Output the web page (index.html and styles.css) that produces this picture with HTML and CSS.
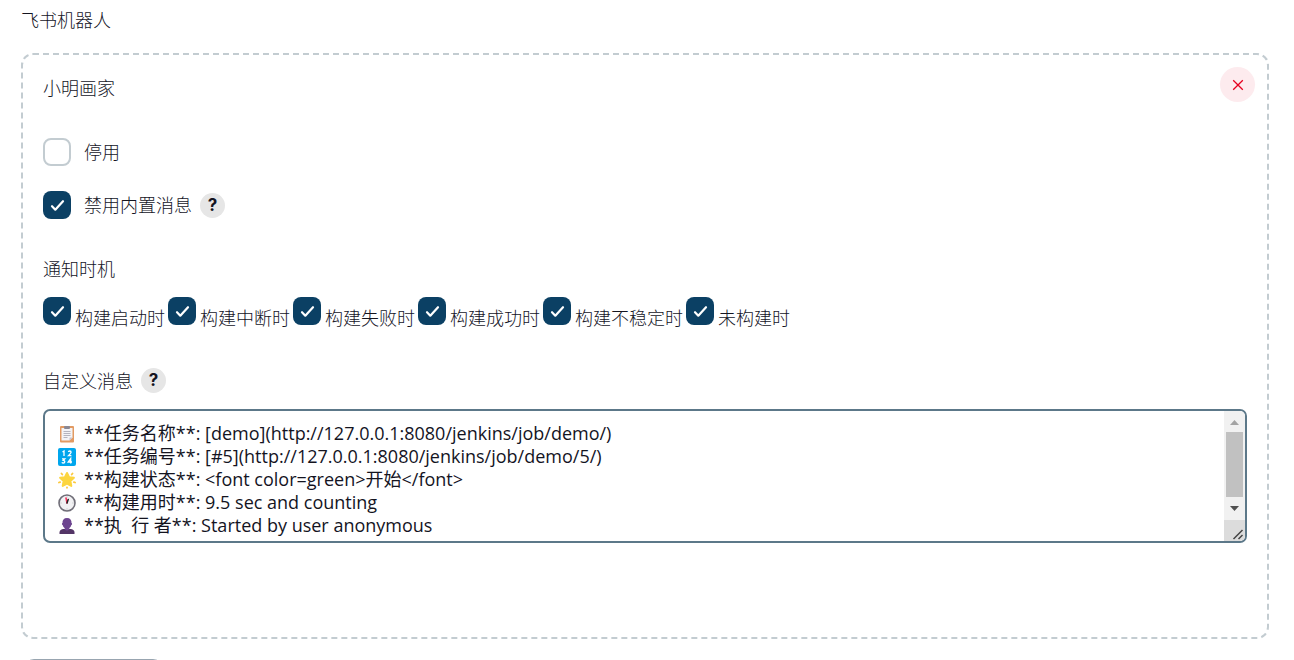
FILE: index.html
```html
<!DOCTYPE html>
<html lang="zh-CN">
<head>
<meta charset="utf-8">
<title>飞书机器人</title>
<link rel="stylesheet" href="styles.css">
</head>
<body>
<main class="page">
  <h1 class="page-title">飞书机器人</h1>
  <section class="robot">
    <button class="remove" type="button" aria-label="删除">
      <svg viewBox="0 0 12 12" width="12" height="12"><path d="M1.200 1.200l9.600 9.600M10.800 1.200l-9.600 9.600"/></svg>
    </button>
    <h2 class="robot-name">小明画家</h2>
    <div class="option">
      <input class="check" type="checkbox" id="disabled">
      <label for="disabled">停用</label>
    </div>
    <div class="option">
      <input class="check" type="checkbox" id="builtin" checked>
      <label for="builtin">禁用内置消息</label>
      <button class="help" type="button">?</button>
    </div>
    <h3 class="group-title">通知时机</h3>
    <div class="events">
      <label class="event"><input class="check" type="checkbox" checked><span class="event-name">构建启动时</span></label>
      <label class="event"><input class="check" type="checkbox" checked><span class="event-name">构建中断时</span></label>
      <label class="event"><input class="check" type="checkbox" checked><span class="event-name">构建失败时</span></label>
      <label class="event"><input class="check" type="checkbox" checked><span class="event-name">构建成功时</span></label>
      <label class="event"><input class="check" type="checkbox" checked><span class="event-name">构建不稳定时</span></label>
      <label class="event"><input class="check" type="checkbox" checked><span class="event-name">未构建时</span></label>
    </div>
    <div class="message-head">
      <label for="message">自定义消息</label>
      <button class="help" type="button">?</button>
    </div>
    <div class="message">
      <textarea class="message-text" id="message" rows="5" spellcheck="false">**任务名称**: [demo](http://127.0.0.1:8080/jenkins/job/demo/)
**任务编号**: [#5](http://127.0.0.1:8080/jenkins/job/demo/5/)
**构建状态**: &lt;font color=green&gt;开始&lt;/font&gt;
**构建用时**: 9.5 sec and counting
**执  行 者**: Started by user anonymous</textarea>
      <div class="message-icons" aria-hidden="true">
        <svg viewBox="0 0 18 18"><rect x="2" y="1" width="14" height="16.5" rx="1" fill="#e29a62"/><path d="M3.500 3h11v9.500l-3 3h-8z" fill="#f3f3f6"/><path d="M11.500 15.500v-3h3z" fill="#c6c3d0"/><rect x="6" y="1" width="6" height="3" rx="1" fill="#8a8894"/><path d="M5.500 6.500h7M5.500 8.500h7M5.500 10.500h7M5.500 12.500h4" stroke="#a5a3b0" stroke-width=".8"/></svg>
        <svg viewBox="0 0 18 18"><rect width="18" height="18" rx="2" fill="#00a6ed"/><path d="M4.500 4l1.500-1v5M10.500 4q0-1 1.300-1t1.300 1.200q0 .8-2.600 3.400h2.900M4 10.800h2.800l-1.500 1.600q1.500 0 1.500 1.300t-1.500 1.300q-1 0-1.500-.6M12.700 15.500v-5l-2.500 3.500h3.800" fill="none" stroke="#fff" stroke-width="1.300"/></svg>
        <svg viewBox="0 0 18 18"><path d="M9 2l2.100 4.200 4.800.6-3.500 3.300.9 4.800L9 12.600l-4.300 2.300.9-4.800-3.500-3.300 4.800-.6z" fill="#fcd53f" stroke="#fcd53f" stroke-width="2" stroke-linejoin="round"/><path d="M3.500 2.500l.8 1M14.500 2.500l-.8 1M.9 11.500l1.200-.4M17.100 11.500l-1.200-.4M9 16.300v.5" stroke="#fcc93f" stroke-width="1.800" stroke-linecap="round"/></svg>
        <svg viewBox="0 0 18 18"><circle cx="9" cy="9" r="8" fill="#f1f1f3" stroke="#706e78" stroke-width="1.600"/><path d="M9 2.500v1M9 14.500v1M2.500 9h1M14.500 9h1" stroke="#aaa" stroke-width=".8"/><path d="M9 9L8 4" stroke="#f8315d" stroke-width="1.500" stroke-linecap="round"/><path d="M9 9l1.200-3.500" stroke="#222" stroke-width="1.500" stroke-linecap="round"/></svg>
        <svg viewBox="0 0 18 18"><path d="M1.500 17v-1.500q0-3 3.500-3.500h8q3.500.5 3.500 3.500V17z" fill="#533566"/><path d="M9 1c3.200 0 4.700 2 4.500 5 .8 0 .8 2-.3 2.300-.3 1.500-1 2.200-1.900 2.900v1.300q-2.300 2-4.600 0v-1.300C5.800 10.500 5.100 9.800 4.800 8.300 3.700 8 3.700 6 4.500 6 4.300 3 5.800 1 9 1z" fill="#6d4590"/></svg>
      </div>
      <div class="scrollbar" aria-hidden="true">
        <svg class="arrow arrow-up" viewBox="0 0 9 5"><path d="M0 5L4.500 0 9 5z"/></svg>
        <div class="thumb"></div>
        <svg class="arrow arrow-down" viewBox="0 0 9 5"><path d="M0 0l4.500 5L9 0z"/></svg>
        <svg class="grip" viewBox="0 0 21 21"><path d="M9.500 19l9-9M14.500 19l4-4"/></svg>
      </div>
    </div>
  </section>
  <button class="add" type="button" aria-label="新增"></button>
</main>
</body>
</html>
```
FILE: styles.css
```css
* { box-sizing: border-box; }
html, body { height: 100%; overflow: hidden; }
body {
  margin: 0;
  background: #fff;
  color: #14141f;
  font: 300 18px/24px "Noto Sans", "Noto Sans CJK SC", sans-serif;
}
h1, h2, h3 { margin: 0; font: inherit; }
button { padding: 0; border: 0; font: inherit; cursor: pointer; }
.page { padding: 8px 25px 0 21px; }
.robot {
  position: relative;
  margin: 21px 0 20px;
  padding: 21px 20px 94px;
  border: 2px dashed #c3ccd1;
  border-radius: 12px;
}
.remove {
  position: absolute;
  top: 12px;
  right: 12px;
  display: grid;
  place-items: center;
  width: 35px;
  height: 35px;
  border-radius: 50%;
  background: #fdebee;
}
.remove path { fill: none; stroke: #e6001f; stroke-width: 1.3; }
.robot-name { margin-bottom: 38px; }
.option { display: flex; align-items: center; height: 28px; margin-bottom: 25px; }
.option label { margin-left: 13px; }
.check {
  appearance: none;
  flex: none;
  width: 28px;
  height: 28px;
  margin: 0;
  border: 2px solid #c3ccd1;
  border-radius: 8px;
  background: #fff;
}
.check:checked {
  border: 0;
  background: #0b4064 url("data:image/svg+xml,%3Csvg xmlns='http://www.w3.org/2000/svg' viewBox='0 0 28 28'%3E%3Cpath d='M9 15.200l3.300 3.500 7.700-8.500' fill='none' stroke='%23fff' stroke-width='2.200' stroke-linecap='round' stroke-linejoin='round'/%3E%3C/svg%3E");
}
.help {
  width: 25px;
  height: 25px;
  margin-left: 8px;
  border-radius: 50%;
  background: #e6e6e6;
  color: #14141f;
  font: 700 17px/25px Inter, sans-serif;
}
.group-title { margin-top: 38px; }
.events { display: flex; flex-wrap: wrap; gap: 3px; margin-top: 16px; }
.event { display: flex; gap: 4px; }
.event-name { padding-top: 9px; }
.message-head { display: flex; align-items: center; height: 25px; margin: 38px 0 16px; }
.message { position: relative; }
.message-text {
  display: block;
  width: 100%;
  height: 134px;
  padding: 11px 24px 5px 39px;
  border: 2px solid #5c7889;
  border-radius: 7px;
  outline: 0;
  resize: none;
  overflow: hidden;
  background: #fff;
  color: inherit;
  font: 370 18px/23px "Open Sans", "Noto Sans CJK SC", sans-serif;
}
.message-icons { position: absolute; top: 16px; left: 15px; display: grid; gap: 5px; }
.message-icons svg { display: block; width: 18px; height: 18px; }
.scrollbar {
  position: absolute;
  top: 2px;
  right: 2px;
  bottom: 2px;
  display: flex;
  flex-direction: column;
  align-items: center;
  width: 21px;
  border-radius: 0 5px 5px 0;
  overflow: hidden;
  background: #f1f1f1;
}
.arrow { width: 9px; height: 5px; }
.arrow-up { margin: 9px 0 7px; fill: #a3a3a3; }
.arrow-down { margin: 9px 0; fill: #505050; }
.thumb { width: 17px; height: 65px; background: #c1c1c1; }
.grip { width: 21px; height: 21px; margin-top: auto; background: #dcdcdc; }
.grip path { fill: none; stroke: #444; stroke-width: 1.5; }
.add {
  display: block;
  width: 139px;
  height: 40px;
  margin-left: 3px;
  border: 1px solid #98a5b0;
  border-radius: 10px;
  background: #fff;
}
```
